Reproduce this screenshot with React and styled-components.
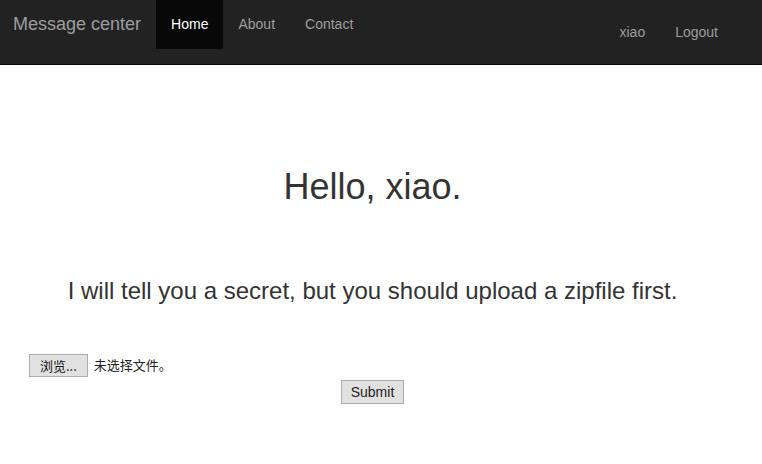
import React from 'react'
import styled, { createGlobalStyle } from 'styled-components'

const GlobalStyle = createGlobalStyle`
  html, body {
    margin: 0;
    padding: 0;
    background: #fff;
  }
  body {
    font-family: "Liberation Sans", Arial, "Noto Sans CJK SC", sans-serif;
    font-size: 14px;
    line-height: 1.42857;
    color: #333;
  }
`

const Navbar = styled.nav`
  display: flex;
  align-items: flex-start;
  min-height: 64px;
  background-color: #222;
  border-bottom: 1px solid #080808;
`

const Brand = styled.a`
  display: block;
  height: 50px;
  padding: 14px 15px 16px 13px;
  box-sizing: border-box;
  font-size: 18px;
  line-height: 20px;
  color: #9d9d9d;
  text-decoration: none;
`

const NavList = styled.ul`
  display: flex;
  margin: ${(p) => (p.$right ? '8px 29px 0 auto' : '0')};
  padding: 0;
  list-style: none;
`

const NavLink = styled.a`
  display: block;
  padding: 14px 15px 15px;
  line-height: 20px;
  color: ${(p) => (p.$active ? '#fff' : '#9d9d9d')};
  background-color: ${(p) => (p.$active ? '#080808' : 'transparent')};
  text-decoration: none;
`

const Main = styled.main`
  width: 745px;
  display: flex;
  flex-direction: column;
  align-items: center;
`

const Heading = styled.h1`
  margin: 102px 0 0;
  font-size: 36px;
  font-weight: 500;
  line-height: 40px;
`

const Lead = styled.h3`
  margin: 71px 0 0;
  font-size: 24px;
  font-weight: 500;
  line-height: 26px;
`

const UploadForm = styled.form`
  align-self: stretch;
  display: flex;
  flex-direction: column;
  align-items: center;
  margin-top: 50px;
`

const FileRow = styled.label`
  align-self: flex-start;
  display: flex;
  align-items: center;
  gap: 6px;
  margin-left: 29px;
  font-size: 13px;
  font-family: "Noto Sans CJK SC", "Liberation Sans", sans-serif;
  color: #222;
  cursor: pointer;
`

const HiddenInput = styled.input`
  display: none;
`

const Button = styled.span`
  display: inline-flex;
  align-items: center;
  justify-content: center;
  box-sizing: border-box;
  height: ${(p) => p.$h || 23}px;
  padding: 0 ${(p) => p.$px || 8}px;
  background: #e1e1e1;
  border: 1px solid #adadad;
  color: #111;
  font-size: ${(p) => p.$fs || 13}px;
  line-height: 1;
`

const SubmitButton = styled.button`
  margin-top: 3px;
  box-sizing: border-box;
  height: 24px;
  width: 63px;
  padding: 0;
  background: #e1e1e1;
  border: 1px solid #adadad;
  border-radius: 0;
  color: #222;
  font-family: "Liberation Sans", Arial, sans-serif;
  font-size: 14px;
`

export default function App() {
  return (
    <>
      <GlobalStyle />
      <Navbar>
        <Brand href="#">Message center</Brand>
        <NavList>
          <li><NavLink href="#" $active>Home</NavLink></li>
          <li><NavLink href="#">About</NavLink></li>
          <li><NavLink href="#">Contact</NavLink></li>
        </NavList>
        <NavList $right>
          <li><NavLink href="#">xiao</NavLink></li>
          <li><NavLink href="#">Logout</NavLink></li>
        </NavList>
      </Navbar>
      <Main>
        <Heading>Hello, xiao.</Heading>
        <Lead>I will tell you a secret, but you should upload a zipfile first.</Lead>
        <UploadForm onSubmit={(e) => e.preventDefault()}>
          <FileRow>
            <HiddenInput type="file" name="file" />
            <Button $px={10}>浏览...</Button>
            <span>未选择文件。</span>
          </FileRow>
          <SubmitButton type="submit">Submit</SubmitButton>
        </UploadForm>
      </Main>
    </>
  )
}
